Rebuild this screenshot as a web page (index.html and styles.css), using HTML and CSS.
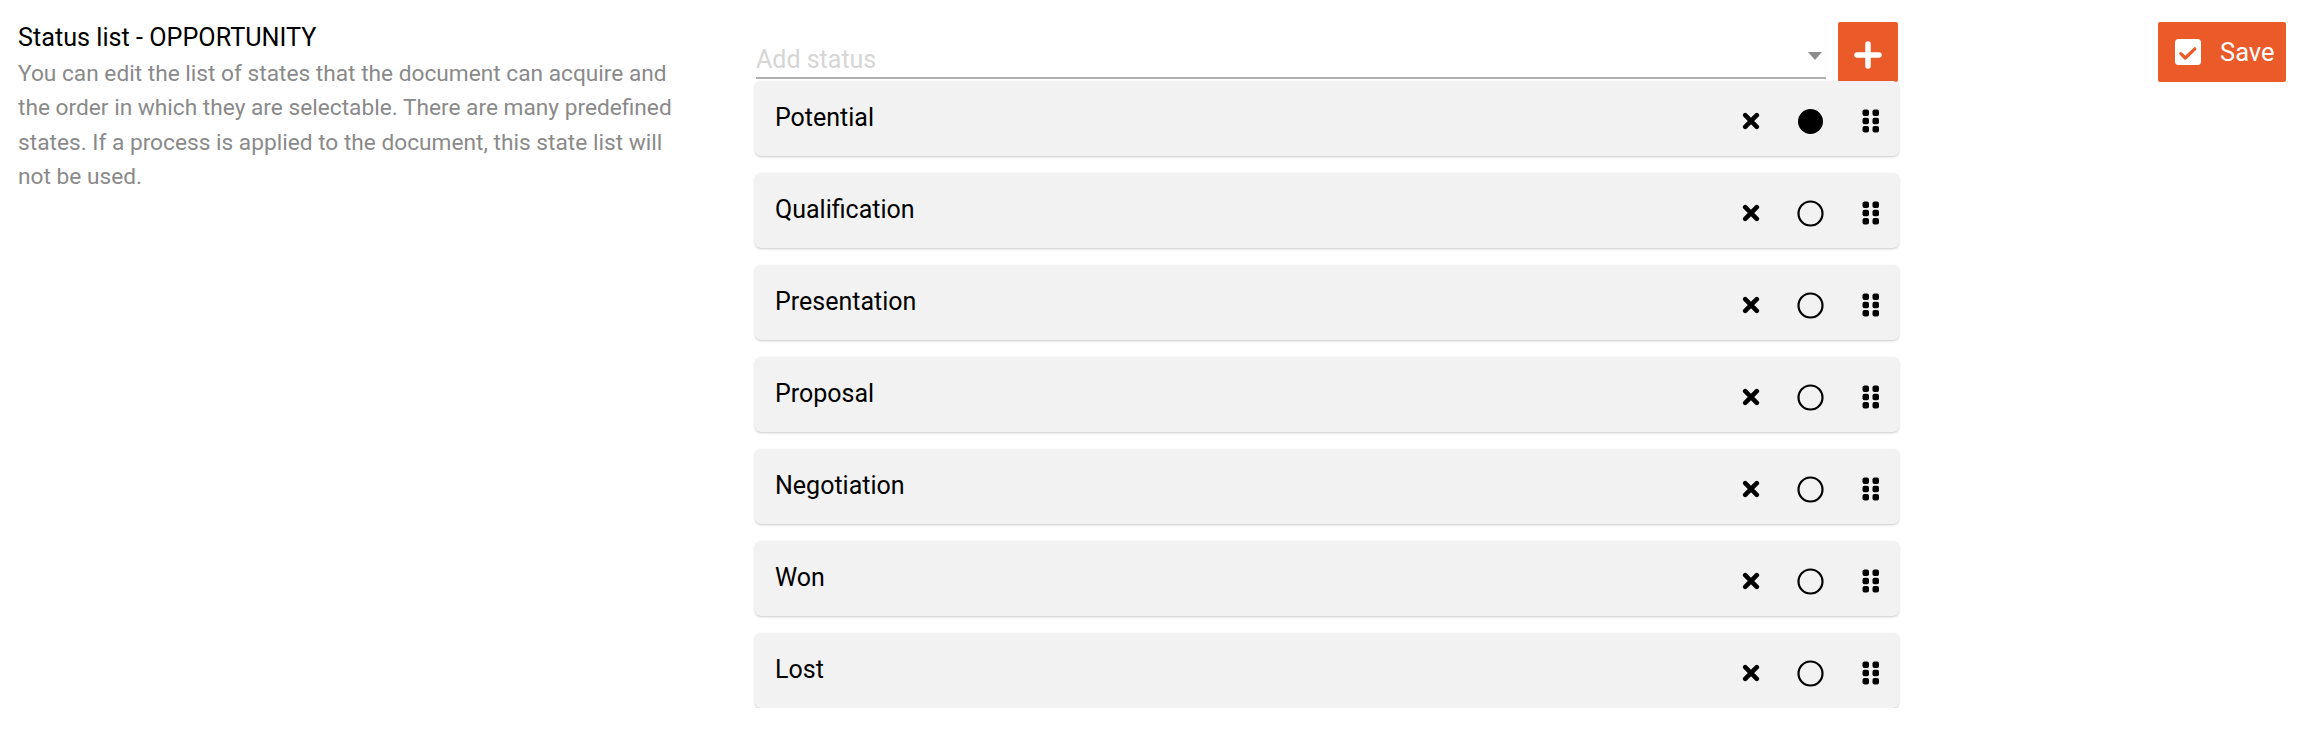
FILE: index.html
```html
<!DOCTYPE html>
<html lang="en">
<head>
<meta charset="utf-8">
<title>Status list - OPPORTUNITY</title>
<link rel="stylesheet" href="styles.css">
</head>
<body>
<div class="page">
  <div class="info">
    <div class="title">Status list - OPPORTUNITY</div>
    <p class="desc">You can edit the list of states that the document can acquire and the order in which they are selectable. There are many predefined states. If a process is applied to the document, this state list will not be used.</p>
  </div>

  <div class="editor">
    <div class="add-row">
      <div class="select">
        <span class="placeholder">Add status</span>
        <span class="caret"></span>
      </div>
      <button class="add-btn" type="button" aria-label="Add">
        <svg width="28" height="28" viewBox="0 0 28 28"><path d="M14 3V25M3 14H25" stroke="#fff" stroke-width="5.5" stroke-linecap="round" fill="none"/></svg>
      </button>
    </div>

    <div class="list">
      <div class="item"><span class="label">Potential</span>
        <div class="actions">
          <svg class="ic-x" width="18" height="18" viewBox="0 0 18 18"><path d="M3.2 3.2L14.8 14.8M14.8 3.2L3.2 14.8" stroke="#000" stroke-width="4.6" stroke-linecap="round"/></svg>
          <svg class="ic-radio" width="27" height="27" viewBox="0 0 27 27"><circle cx="13.5" cy="13.5" r="12.5" fill="#000"/></svg>
          <svg class="ic-drag" width="18" height="24" viewBox="0 0 18 24"><g fill="#000"><rect x="0.5" y="0.5" width="6.5" height="6.5" rx="2"/><rect x="10.5" y="0.5" width="6.5" height="6.5" rx="2"/><rect x="0.5" y="8.7" width="6.5" height="6.5" rx="2"/><rect x="10.5" y="8.7" width="6.5" height="6.5" rx="2"/><rect x="0.5" y="16.9" width="6.5" height="6.5" rx="2"/><rect x="10.5" y="16.9" width="6.5" height="6.5" rx="2"/></g></svg>
        </div>
      </div>
      <div class="item"><span class="label">Qualification</span>
        <div class="actions">
          <svg class="ic-x" width="18" height="18" viewBox="0 0 18 18"><path d="M3.2 3.2L14.8 14.8M14.8 3.2L3.2 14.8" stroke="#000" stroke-width="4.6" stroke-linecap="round"/></svg>
          <svg class="ic-radio" width="27" height="27" viewBox="0 0 27 27"><circle cx="13.5" cy="13.5" r="12" fill="none" stroke="#000" stroke-width="2.2"/></svg>
          <svg class="ic-drag" width="18" height="24" viewBox="0 0 18 24"><g fill="#000"><rect x="0.5" y="0.5" width="6.5" height="6.5" rx="2"/><rect x="10.5" y="0.5" width="6.5" height="6.5" rx="2"/><rect x="0.5" y="8.7" width="6.5" height="6.5" rx="2"/><rect x="10.5" y="8.7" width="6.5" height="6.5" rx="2"/><rect x="0.5" y="16.9" width="6.5" height="6.5" rx="2"/><rect x="10.5" y="16.9" width="6.5" height="6.5" rx="2"/></g></svg>
        </div>
      </div>
      <div class="item"><span class="label">Presentation</span>
        <div class="actions">
          <svg class="ic-x" width="18" height="18" viewBox="0 0 18 18"><path d="M3.2 3.2L14.8 14.8M14.8 3.2L3.2 14.8" stroke="#000" stroke-width="4.6" stroke-linecap="round"/></svg>
          <svg class="ic-radio" width="27" height="27" viewBox="0 0 27 27"><circle cx="13.5" cy="13.5" r="12" fill="none" stroke="#000" stroke-width="2.2"/></svg>
          <svg class="ic-drag" width="18" height="24" viewBox="0 0 18 24"><g fill="#000"><rect x="0.5" y="0.5" width="6.5" height="6.5" rx="2"/><rect x="10.5" y="0.5" width="6.5" height="6.5" rx="2"/><rect x="0.5" y="8.7" width="6.5" height="6.5" rx="2"/><rect x="10.5" y="8.7" width="6.5" height="6.5" rx="2"/><rect x="0.5" y="16.9" width="6.5" height="6.5" rx="2"/><rect x="10.5" y="16.9" width="6.5" height="6.5" rx="2"/></g></svg>
        </div>
      </div>
      <div class="item"><span class="label">Proposal</span>
        <div class="actions">
          <svg class="ic-x" width="18" height="18" viewBox="0 0 18 18"><path d="M3.2 3.2L14.8 14.8M14.8 3.2L3.2 14.8" stroke="#000" stroke-width="4.6" stroke-linecap="round"/></svg>
          <svg class="ic-radio" width="27" height="27" viewBox="0 0 27 27"><circle cx="13.5" cy="13.5" r="12" fill="none" stroke="#000" stroke-width="2.2"/></svg>
          <svg class="ic-drag" width="18" height="24" viewBox="0 0 18 24"><g fill="#000"><rect x="0.5" y="0.5" width="6.5" height="6.5" rx="2"/><rect x="10.5" y="0.5" width="6.5" height="6.5" rx="2"/><rect x="0.5" y="8.7" width="6.5" height="6.5" rx="2"/><rect x="10.5" y="8.7" width="6.5" height="6.5" rx="2"/><rect x="0.5" y="16.9" width="6.5" height="6.5" rx="2"/><rect x="10.5" y="16.9" width="6.5" height="6.5" rx="2"/></g></svg>
        </div>
      </div>
      <div class="item"><span class="label">Negotiation</span>
        <div class="actions">
          <svg class="ic-x" width="18" height="18" viewBox="0 0 18 18"><path d="M3.2 3.2L14.8 14.8M14.8 3.2L3.2 14.8" stroke="#000" stroke-width="4.6" stroke-linecap="round"/></svg>
          <svg class="ic-radio" width="27" height="27" viewBox="0 0 27 27"><circle cx="13.5" cy="13.5" r="12" fill="none" stroke="#000" stroke-width="2.2"/></svg>
          <svg class="ic-drag" width="18" height="24" viewBox="0 0 18 24"><g fill="#000"><rect x="0.5" y="0.5" width="6.5" height="6.5" rx="2"/><rect x="10.5" y="0.5" width="6.5" height="6.5" rx="2"/><rect x="0.5" y="8.7" width="6.5" height="6.5" rx="2"/><rect x="10.5" y="8.7" width="6.5" height="6.5" rx="2"/><rect x="0.5" y="16.9" width="6.5" height="6.5" rx="2"/><rect x="10.5" y="16.9" width="6.5" height="6.5" rx="2"/></g></svg>
        </div>
      </div>
      <div class="item"><span class="label">Won</span>
        <div class="actions">
          <svg class="ic-x" width="18" height="18" viewBox="0 0 18 18"><path d="M3.2 3.2L14.8 14.8M14.8 3.2L3.2 14.8" stroke="#000" stroke-width="4.6" stroke-linecap="round"/></svg>
          <svg class="ic-radio" width="27" height="27" viewBox="0 0 27 27"><circle cx="13.5" cy="13.5" r="12" fill="none" stroke="#000" stroke-width="2.2"/></svg>
          <svg class="ic-drag" width="18" height="24" viewBox="0 0 18 24"><g fill="#000"><rect x="0.5" y="0.5" width="6.5" height="6.5" rx="2"/><rect x="10.5" y="0.5" width="6.5" height="6.5" rx="2"/><rect x="0.5" y="8.7" width="6.5" height="6.5" rx="2"/><rect x="10.5" y="8.7" width="6.5" height="6.5" rx="2"/><rect x="0.5" y="16.9" width="6.5" height="6.5" rx="2"/><rect x="10.5" y="16.9" width="6.5" height="6.5" rx="2"/></g></svg>
        </div>
      </div>
      <div class="item"><span class="label">Lost</span>
        <div class="actions">
          <svg class="ic-x" width="18" height="18" viewBox="0 0 18 18"><path d="M3.2 3.2L14.8 14.8M14.8 3.2L3.2 14.8" stroke="#000" stroke-width="4.6" stroke-linecap="round"/></svg>
          <svg class="ic-radio" width="27" height="27" viewBox="0 0 27 27"><circle cx="13.5" cy="13.5" r="12" fill="none" stroke="#000" stroke-width="2.2"/></svg>
          <svg class="ic-drag" width="18" height="24" viewBox="0 0 18 24"><g fill="#000"><rect x="0.5" y="0.5" width="6.5" height="6.5" rx="2"/><rect x="10.5" y="0.5" width="6.5" height="6.5" rx="2"/><rect x="0.5" y="8.7" width="6.5" height="6.5" rx="2"/><rect x="10.5" y="8.7" width="6.5" height="6.5" rx="2"/><rect x="0.5" y="16.9" width="6.5" height="6.5" rx="2"/><rect x="10.5" y="16.9" width="6.5" height="6.5" rx="2"/></g></svg>
        </div>
      </div>
    </div>
  </div>

  <button class="save-btn" type="button">
    <svg width="26" height="26" viewBox="0 0 26 26"><rect x="0" y="0" width="26" height="26" rx="3.5" fill="#fff"/><path d="M5.8 14.6L10.3 19L19.8 9.8" stroke="#eb5a29" stroke-width="3.2" stroke-linecap="round" stroke-linejoin="round" fill="none"/></svg>
    <span>Save</span>
  </button>
</div>
</body>
</html>
```

FILE: styles.css
```css
* { box-sizing: border-box; }

html, body {
  margin: 0;
  padding: 0;
  background: #fff;
}

body {
  font-family: Roboto, "Liberation Sans", Arial, sans-serif;
  color: #000;
}

.page {
  display: flex;
  align-items: flex-start;
  padding: 22px 16px 0 18px;
}

.info {
  flex: none;
  width: 737px;
}

.title {
  margin-top: 1px;
  font-size: 25.2px;
  line-height: 29px;
  color: #000;
}

.desc {
  margin: 5px 0 0;
  max-width: 676px;
  font-size: 22.7px;
  line-height: 34.4px;
  color: #8a8a8a;
}

.editor {
  flex: none;
  width: 1144px;
}

.add-row {
  display: flex;
  align-items: flex-start;
  gap: 12px;
  height: 59px;
  padding-left: 1px;
}

.select {
  flex: 1;
  position: relative;
  height: 57px;
  display: flex;
  align-items: flex-end;
  padding-bottom: 3px;
  border-bottom: 2px solid #b0b0b0;
}

.placeholder {
  font-size: 25px;
  line-height: 28px;
  color: #d6d6d6;
}

.caret {
  position: absolute;
  right: 4px;
  top: 30px;
  width: 0;
  height: 0;
  border-left: 7.5px solid transparent;
  border-right: 7.5px solid transparent;
  border-top: 8px solid #8c8c8c;
}

.add-btn {
  flex: none;
  width: 60px;
  height: 60px;
  margin-right: 1px;
  border: 0;
  border-radius: 2px;
  background: #eb5a29;
  display: flex;
  align-items: center;
  justify-content: center;
  padding: 5px 0 0;
  cursor: pointer;
}

.list {
  display: flex;
  flex-direction: column;
  gap: 17px;
}

.item {
  height: 75px;
  display: flex;
  align-items: center;
  justify-content: space-between;
  padding: 0 19px 0 20px;
  background: #f2f2f2;
  border-radius: 6px;
  box-shadow: 0 1px 3px rgba(0, 0, 0, 0.16), 0 1px 1px rgba(0, 0, 0, 0.06);
}

.label {
  font-size: 25px;
  line-height: 28px;
  margin-top: -2px;
  color: #000;
}

.actions {
  display: flex;
  align-items: center;
  margin-top: 5px;
}

.ic-x { display: block; }

.ic-radio {
  display: block;
  margin-left: 37px;
}

.ic-drag {
  display: block;
  margin-left: 38px;
}

.save-btn {
  flex: none;
  margin-left: auto;
  width: 128px;
  height: 60px;
  border: 0;
  border-radius: 2px;
  background: #eb5a29;
  color: #fff;
  display: flex;
  align-items: center;
  padding: 0 0 0 17px;
  font-family: Roboto, "Liberation Sans", Arial, sans-serif;
  font-size: 25.5px;
  line-height: 28px;
  cursor: pointer;
}

.save-btn svg {
  display: block;
  flex: none;
}

.save-btn span {
  margin-left: 19px;
}
```
